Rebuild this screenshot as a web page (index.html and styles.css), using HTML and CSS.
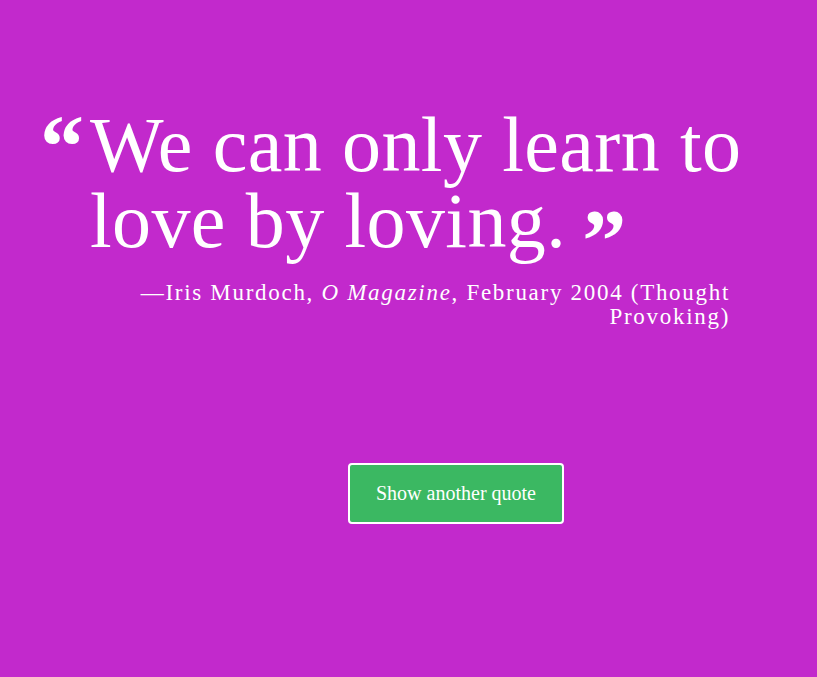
FILE: index.html
```html
<!DOCTYPE html>
<html lang="en">
<head>
<meta charset="utf-8">
<title>Random Quote</title>
<link rel="stylesheet" href="styles.css">
</head>
<body>
<main class="page">
  <section class="quote-box">
    <blockquote class="quote">
      <span class="mark open">&ldquo;</span>
      <p class="quote-text">We can only learn to love by loving.<span class="mark close">&rdquo;</span></p>
    </blockquote>
    <p class="author">&mdash;Iris Murdoch, <em>O Magazine</em>, February 2004 (Thought Provoking)</p>
  </section>
  <div class="actions">
    <button class="btn">Show another quote</button>
  </div>
</main>
</body>
</html>
```
FILE: styles.css
```css
html, body {
  margin: 0;
  padding: 0;
  height: 100%;
}
body {
  background: #c229cc;
  color: #fff;
  font-family: "Liberation Serif", "DejaVu Serif", serif;
}
.page {
  padding-top: 107px;
}
.quote-box {
  width: 770px;
}
.quote {
  margin: 0 0 0 40px;
  display: flex;
  align-items: flex-start;
}
.mark {
  font-size: 88px;
  line-height: 1;
  font-weight: bold;
}
.open {
  width: 50px;
  flex: none;
  margin-top: -4px;
}
.close {
  display: inline-block;
  vertical-align: top;
  margin-left: 16px;
  margin-top: 14px;
  height: 50px;
  letter-spacing: 0;
}
.quote-text {
  margin: 0;
  font-size: 78px;
  line-height: 76px;
  letter-spacing: 0.4px;
  flex: 1;
  min-width: 0;
}
.author {
  margin: 22px 0 0;
  text-align: right;
  font-size: 23px;
  line-height: 24px;
  letter-spacing: 1.7px;
  padding-left: 140px;
  padding-right: 40px;
}
.author em {
  font-style: italic;
}
.actions {
  margin-top: 134px;
  padding-left: 348px;
}
.btn {
  width: 216px;
  height: 61px;
  background: #3bb862;
  border: 2px solid #fff;
  border-radius: 4px;
  color: #fff;
  font-family: "Liberation Serif", "DejaVu Serif", serif;
  font-size: 20px;
  cursor: pointer;
}
```
